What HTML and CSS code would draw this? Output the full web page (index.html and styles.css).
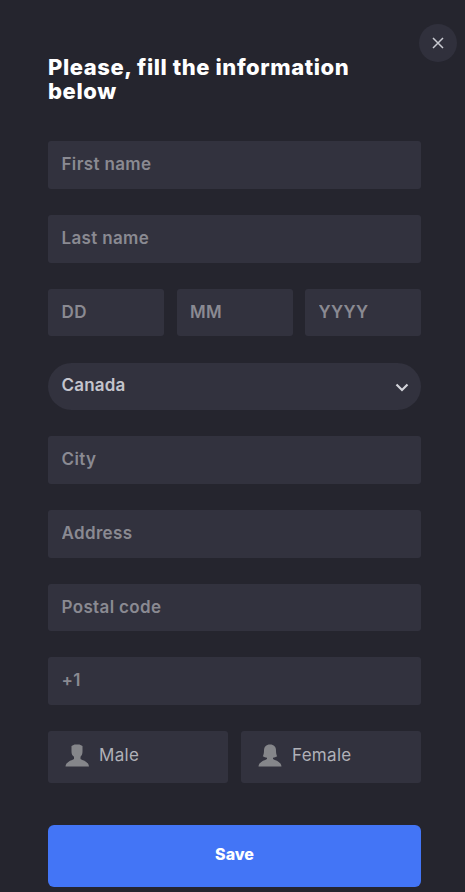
FILE: index.html
```html
<!DOCTYPE html>
<html lang="en">
<head>
  <meta charset="UTF-8" />
  <meta name="viewport" content="width=device-width, initial-scale=1.0" />
  <title>Fill the information</title>
  <link rel="stylesheet" href="styles.css">
</head>
<body>
  <div class="modal">
    <button class="close" aria-label="Close">
      <svg width="12" height="12" viewBox="0 0 12 12"><path d="M1 1l10 10M11 1L1 11" stroke="#c9cad1" stroke-width="1.5" fill="none"/></svg>
    </button>

    <h1 class="title">Please, fill the information below</h1>

    <form class="form">
      <input class="field" type="text" placeholder="First name">
      <input class="field" type="text" placeholder="Last name">

      <div class="date-row">
        <input class="field" type="text" placeholder="DD">
        <input class="field" type="text" placeholder="MM">
        <input class="field" type="text" placeholder="YYYY">
      </div>

      <div class="select">
        <span>Canada</span>
        <svg width="14" height="9" viewBox="0 0 14 9"><path d="M1.500 1.500L7 7l5.500-5.500" stroke="#d3d4da" stroke-width="2.200" fill="none"/></svg>
      </div>

      <input class="field" type="text" placeholder="City">
      <input class="field" type="text" placeholder="Address">
      <input class="field" type="text" placeholder="Postal code">
      <input class="field" type="text" placeholder="+1">

      <div class="gender-row">
        <div class="gender">
          <svg width="24" height="23" viewBox="0 0 24 23"><path d="M6.500 2l3-1.500h5l3 1.500v5.500c0 2.500-.8 4.200-2 5.300v2.200c2.500 1.500 8 2.500 8.500 7.500H.5c.5-5 6-6 8.500-7.500v-2.200c-1.700-1.100-2.500-2.800-2.500-5.300z" fill="#85868a"/></svg>
          <span>Male</span>
        </div>
        <div class="gender">
          <svg width="24" height="23" viewBox="0 0 24 23"><path d="M12 .5c4 0 6 2.500 6 6 0 2.500.4 4.500 1.200 5.800-1.300.9-2.700 1.300-4.200 1.400v1.300c2.500 1.500 8 2.500 8.500 7.500H.5c.5-5 6-6 8.500-7.500v-1.300c-1.500-.1-2.900-.5-4.200-1.400.8-1.300 1.200-3.300 1.200-5.800 0-3.500 2-6 6-6z" fill="#85868a"/></svg>
          <span>Female</span>
        </div>
      </div>

      <button class="save" type="button">Save</button>
    </form>
  </div>
</body>
</html>
```

FILE: styles.css
```css
* {
  box-sizing: border-box;
}

body {
  margin: 0;
  background: #25252e;
  font-family: 'Inter', 'Liberation Sans', sans-serif;
  color: #fff;
}

.modal {
  position: relative;
  width: 465px;
  height: 892px;
  padding: 55px 44px 0 48px;
  overflow: hidden;
}

.close {
  position: absolute;
  top: 24px;
  right: 8px;
  width: 38px;
  height: 38px;
  border: none;
  border-radius: 50%;
  background: #30303c;
  display: flex;
  align-items: center;
  justify-content: center;
  padding: 0;
}

.title {
  margin: 0 0 38.300px;
  font-size: 22px;
  line-height: 24px;
  font-weight: 800;
  letter-spacing: 0.58px;
  max-width: 320px;
}

.form {
  display: flex;
  flex-direction: column;
  gap: 26.100px;
}

.field {
  width: 100%;
  min-width: 0;
  height: 47.650px;
  padding: 0 13.500px 2px;
  border: none;
  border-radius: 3px;
  background: #32323e;
  color: #fff;
  font-family: inherit;
  font-size: 17px;
  font-weight: 600;
  letter-spacing: 0.35px;
  outline: none;
}

.field::placeholder {
  color: #8a8a92;
  opacity: 1;
}

.date-row {
  display: flex;
  gap: 12.500px;
}

.select {
  height: 47.650px;
  padding: 0 12px 3px 13.500px;
  border-radius: 24px;
  background: #32323e;
  color: #c4c5cd;
  font-size: 17px;
  font-weight: 600;
  letter-spacing: 0.2px;
  display: flex;
  align-items: center;
  justify-content: space-between;
}

.select svg {
  margin-top: 5px;
}

.gender-row {
  display: flex;
  gap: 13px;
}

.gender {
  flex: 1;
  height: 52px;
  padding: 0 17px 4px;
  border-radius: 3px;
  background: #32323e;
  color: #b0b1b8;
  font-size: 17px;
  letter-spacing: 0.3px;
  display: flex;
  align-items: center;
  gap: 10px;
}

.save {
  height: 62px;
  margin-top: 16px;
  padding: 0 0 4px;
  border: none;
  border-radius: 6px;
  background: #4375f6;
  color: #fff;
  font-family: inherit;
  font-size: 16px;
  font-weight: 800;
}
```
